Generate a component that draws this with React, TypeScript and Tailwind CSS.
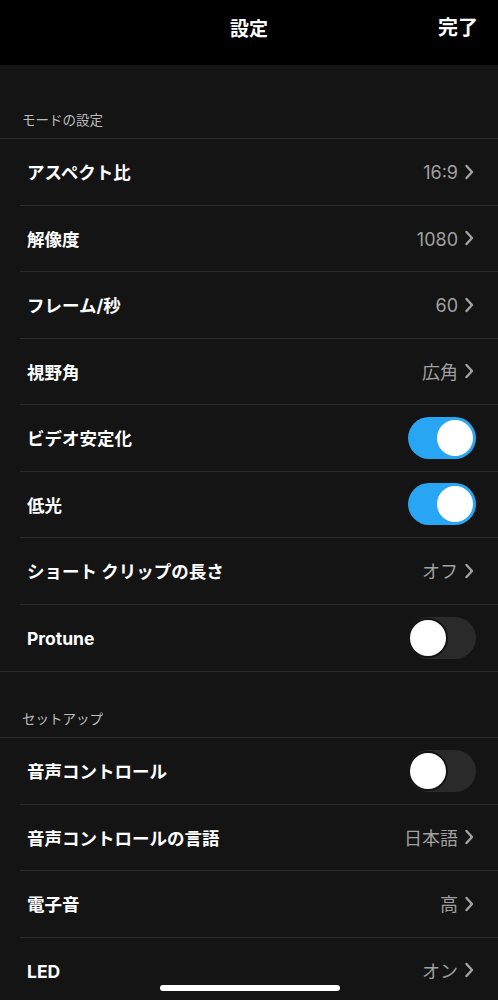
import React from 'react'

type Row =
  | { label: string; value: string }
  | { label: string; toggle: boolean }

const modeRows: Row[] = [
  { label: 'アスペクト比', value: '16:9' },
  { label: '解像度', value: '1080' },
  { label: 'フレーム/秒', value: '60' },
  { label: '視野角', value: '広角' },
  { label: 'ビデオ安定化', toggle: true },
  { label: '低光', toggle: true },
  { label: 'ショート クリップの長さ', value: 'オフ' },
  { label: 'Protune', toggle: false },
]

const setupRows: Row[] = [
  { label: '音声コントロール', toggle: false },
  { label: '音声コントロールの言語', value: '日本語' },
  { label: '電子音', value: '高' },
  { label: 'LED', value: 'オン' },
]

const Chevron = () => (
  <svg width="10" height="16" viewBox="0 0 10 16" fill="none">
    <path d="M2.5 2 L8 8 L2.5 14" stroke="#a3a3a3" strokeWidth="2.4" strokeLinecap="round" strokeLinejoin="round" />
  </svg>
)

const Toggle = ({ on }: { on: boolean }) =>
  on ? (
    <div className="w-[68px] h-[42px] rounded-full bg-[#28a5f3] flex items-center justify-end px-[3px]">
      <div className="w-[36px] h-[36px] rounded-full bg-white" />
    </div>
  ) : (
    <div className="w-[68px] h-[42px] rounded-full bg-[#2a2a2a] flex items-center">
      <div className="w-[40px] h-[40px] rounded-full bg-white border-2 border-[#141414]" />
    </div>
  )

const SettingRow = ({ row, last }: { row: Row; last?: boolean }) => (
  <div className={`h-[66.5px] flex items-center pr-[22px] ${last ? 'pl-[27px]' : 'border-b border-[#2a2a2a] ml-[20px] pl-[7px]'}`}>
    <span className="flex-1 mt-[3px] text-[17.5px] font-bold text-white">{row.label}</span>
    {'toggle' in row ? (
      <Toggle on={row.toggle} />
    ) : (
      <div className="flex items-center gap-[6px] pr-[2px]">
        <span className="mt-[2px] text-[18px] text-[#a0a0a0]">{row.value}</span>
        <Chevron />
      </div>
    )}
  </div>
)

const SectionHeader = ({ title, h }: { title: string; h: string }) => (
  <div className={`${h} flex items-end pl-[22px] pb-[8px] border-b border-[#2a2a2a]`}>
    <span className="text-[13.5px] text-[#bdbdbd]">{title}</span>
  </div>
)

export default function App() {
  return (
    <div
      className="w-[498px] h-[1000px] bg-[#141414] overflow-hidden relative"
      style={{ fontFamily: 'Inter, "Noto Sans CJK JP", sans-serif' }}
    >
      <div className="h-[65px] bg-black flex items-center justify-center relative">
        <span className="text-[19px] font-bold text-white -mt-[4px]">設定</span>
        <span className="absolute right-[20px] top-[13px] text-[20px] font-bold text-white">完了</span>
      </div>

      <SectionHeader title="モードの設定" h="h-[74px]" />
      {modeRows.map((r, i) => (
        <div key={r.label} className={i === modeRows.length - 1 ? 'border-b border-[#2a2a2a]' : ''}>
          <SettingRow row={r} last={i === modeRows.length - 1} />
        </div>
      ))}

      <SectionHeader title="セットアップ" h="h-[66px]" />
      {setupRows.map((r) => (
        <SettingRow key={r.label} row={r} />
      ))}

      <div className="absolute left-[160px] bottom-[9px] w-[180px] h-[6px] rounded-full bg-white" />
    </div>
  )
}
